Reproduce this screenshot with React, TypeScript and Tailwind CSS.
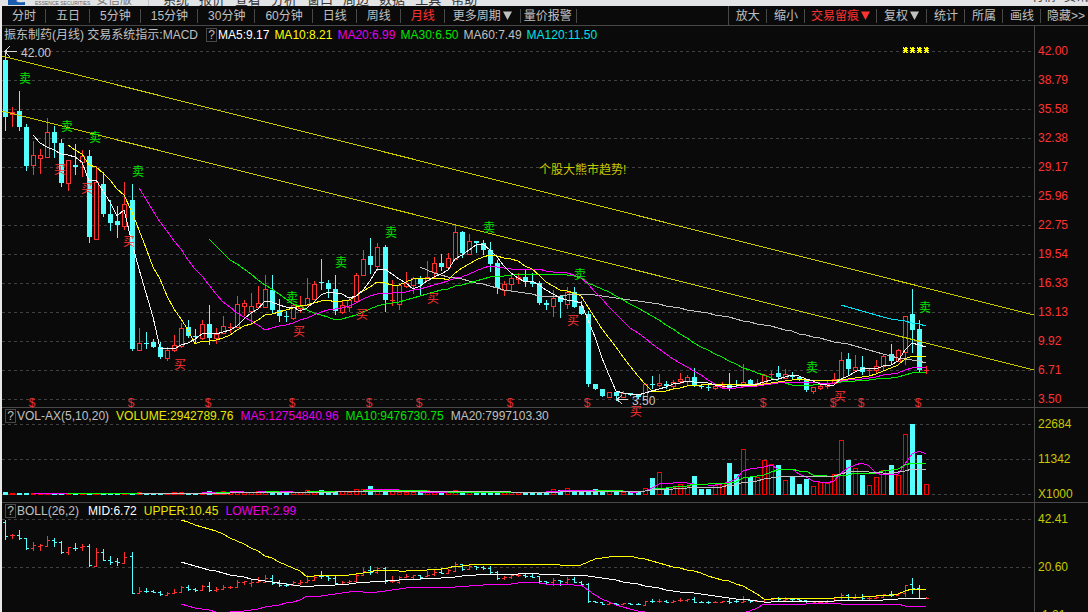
import React from "react";

type Candle = [up: 0 | 1, high: number, top: number, bottom: number, low: number];

// up/down, then high, body top, body bottom and low on the price scale
const candles: Candle[] = [
  [0, 52, 60, 117, 130], [1, 107, 112, 114, 126], [0, 91, 111, 127, 130], [0, 124, 127, 166, 170],
  [1, 141, 155, 165, 174], [1, 149, 155, 158, 173], [1, 118, 132, 157, 157], [0, 126, 132, 143, 157],
  [0, 139, 143, 183, 186], [1, 160, 160, 183, 190], [0, 144, 165, 167, 174], [1, 150, 156, 162, 176],
  [0, 150, 156, 237, 242], [1, 166, 182, 239, 239], [0, 172, 184, 214, 216], [0, 200, 214, 223, 230],
  [0, 206, 221, 225, 237], [1, 182, 204, 226, 229], [0, 184, 200, 349, 350], [1, 328, 343, 350, 350],
  [0, 332, 343, 344, 348], [0, 339, 342, 347, 347], [0, 342, 347, 357, 358], [1, 347, 350, 358, 360],
  [1, 335, 345, 350, 351], [1, 323, 328, 346, 347], [0, 320, 327, 336, 337], [0, 329, 336, 337, 342],
  [1, 320, 324, 338, 339], [0, 305, 324, 338, 344], [1, 328, 334, 338, 343], [1, 316, 326, 333, 333],
  [1, 323, 327, 328, 332], [1, 296, 304, 327, 327], [1, 300, 303, 306, 315], [1, 293, 306, 311, 324],
  [1, 286, 303, 307, 307], [1, 275, 289, 307, 307], [0, 275, 290, 310, 312], [0, 299, 310, 316, 321],
  [0, 311, 316, 317, 321], [1, 303, 305, 318, 319], [1, 296, 305, 308, 312], [1, 278, 298, 305, 305],
  [1, 281, 284, 299, 299], [0, 259, 282, 283, 289], [0, 280, 283, 289, 297], [0, 275, 289, 311, 314],
  [1, 300, 305, 312, 313], [1, 297, 300, 307, 311], [1, 273, 275, 301, 302], [1, 250, 259, 275, 275],
  [0, 238, 256, 265, 273], [1, 243, 247, 266, 270], [0, 245, 247, 300, 311], [1, 280, 300, 301, 305],
  [1, 283, 285, 304, 309], [1, 272, 283, 286, 287], [1, 277, 278, 285, 293], [0, 276, 279, 284, 295],
  [1, 261, 277, 280, 280], [1, 257, 263, 272, 278], [0, 254, 263, 267, 270], [1, 253, 258, 267, 267],
  [1, 225, 232, 259, 259], [0, 231, 232, 253, 257], [1, 234, 241, 254, 254], [0, 241, 241, 243, 252],
  [0, 240, 243, 250, 254], [0, 242, 250, 264, 271], [0, 260, 263, 288, 293], [1, 281, 284, 290, 295],
  [1, 275, 278, 284, 291], [1, 273, 277, 279, 283], [0, 270, 277, 282, 286], [0, 273, 282, 284, 286],
  [0, 281, 283, 303, 304], [0, 300, 303, 305, 309], [1, 290, 298, 306, 316], [0, 296, 296, 302, 317],
  [1, 287, 292, 304, 308], [0, 287, 292, 307, 307], [0, 301, 306, 314, 314], [0, 311, 314, 384, 386],
  [0, 384, 384, 389, 389], [0, 389, 389, 396, 396], [1, 392, 392, 397, 397], [0, 391, 392, 396, 400],
  [1, 391, 393, 397, 397], [0, 393, 393, 395, 395], [0, 394, 395, 397, 398], [1, 383, 384, 399, 399],
  [0, 376, 384, 385, 388], [1, 374, 383, 385, 386], [0, 381, 384, 386, 388], [1, 380, 382, 386, 389],
  [1, 373, 379, 381, 383], [1, 375, 377, 381, 384], [0, 368, 377, 386, 386], [0, 384, 386, 387, 388],
  [0, 385, 387, 388, 390], [1, 385, 386, 388, 389], [1, 382, 385, 387, 387], [0, 373, 384, 388, 390],
  [0, 380, 384, 385, 386], [1, 364, 382, 386, 386], [0, 379, 380, 384, 386], [1, 379, 383, 385, 385],
  [1, 374, 375, 383, 383], [1, 371, 374, 375, 378], [0, 366, 373, 377, 379], [1, 369, 374, 378, 378],
  [0, 372, 375, 377, 379], [0, 377, 377, 379, 380], [0, 379, 379, 390, 391], [1, 387, 387, 391, 393],
  [1, 384, 386, 388, 389], [1, 381, 384, 386, 388], [1, 373, 379, 383, 383], [1, 352, 360, 380, 380],
  [0, 353, 359, 369, 374], [1, 355, 367, 370, 370], [0, 356, 367, 372, 374], [1, 368, 370, 371, 375],
  [1, 360, 366, 370, 372], [1, 354, 356, 366, 369], [0, 344, 354, 361, 363], [1, 349, 350, 361, 361],
  [1, 316, 316, 352, 364], [0, 289, 314, 330, 352], [0, 320, 329, 370, 372], [1, 366, 370, 371, 373],
];

// early bars that stand above the base line, then every bar from the 92nd on
const earlyVolumes: Record<number, number> = {
  0: 492, 19: 492, 24: 492, 25: 492, 29: 491, 31: 491, 33: 491, 36: 491, 37: 491, 38: 491, 43: 490,
  44: 491, 45: 490, 48: 491, 50: 489, 51: 489, 52: 486, 53: 491, 54: 490, 55: 491, 60: 490, 64: 490,
  78: 489, 79: 490, 80: 488, 81: 491, 82: 491, 83: 491, 84: 489, 85: 491, 86: 491, 90: 491,
};
const lateVolumes = [
  488, 478, 472, 488, 487, 484, 486, 476, 489, 489, 485, 483, 463, 474, 449, 477, 477, 460, 464, 465,
  480, 477, 484, 479, 486, 482, 483, 474, 440, 460, 468, 475, 485, 477, 470, 465, 475, 434, 424, 455, 484,
];
const volumes = candles.map((_, i) =>
  i >= 91 ? lateVolumes[i - 91] : (earlyVolumes[i] ?? (i < 30 ? 493 : 492))
);

const barX = (i: number) => 5 + 7 * i + Math.floor((i + 18) / 36);
const toBoll = (y: number) => 520 + (y - 51) * 0.2434;

const closes = candles.map(([up, , top, bottom]) => (up ? top : bottom));

function average(data: number[], n: number, i: number) {
  let sum = 0;
  for (let k = i - n + 1; k <= i; k++) sum += data[k];
  return sum / n;
}

function linePoints(n: number, value: (i: number) => number) {
  const points: string[] = [];
  for (let i = n - 1; i < candles.length; i++) {
    points.push(`${barX(i)},${Math.round(value(i))}`);
  }
  return points.join(" ");
}

function deviation(i: number) {
  const mid = average(closes, 26, i);
  return Math.sqrt(average(closes.map((c) => (c - mid) ** 2), 26, i));
}

const priceLines = [
  { n: 60, color: "#c0c0c0" },
  { n: 120, color: "#00e0f0" },
  { n: 30, color: "#00f000" },
  { n: 20, color: "#ff00ff" },
  { n: 10, color: "#ffff00" },
  { n: 5, color: "#f4f4f4" },
];

const volumeLines = [
  { n: 5, color: "#ff00ff" },
  { n: 10, color: "#00ff00" },
  { n: 20, color: "#c0c0c0" },
];

const bollLines = [
  { k: 0, color: "#ffffff" },
  { k: -2, color: "#ffff00" },
  { k: 2, color: "#ff00ff" },
];

const sells = [
  [25, 78], [67, 126], [95, 137], [138, 171], [292, 297], [341, 262],
  [391, 232], [489, 227], [580, 274], [812, 367], [925, 307],
];
const buys = [
  [60, 169], [87, 188], [129, 241], [180, 364], [299, 331],
  [362, 314], [433, 298], [573, 320], [636, 411], [840, 396],
];
const dividends = [32, 131, 208, 292, 369, 419, 510, 587, 763, 833, 861, 918];

const menus = ["系统", "报价", "查看", "分析", "窗口", "周边", "数据", "工具", "帮助"];
const periods = ["分时", "五日", "5分钟", "15分钟", "30分钟", "60分钟", "日线", "周线", "月线"];
const prices = [
  "42.00", "38.79", "35.58", "32.38", "29.17", "25.96", "22.75",
  "19.54", "16.33", "13.13", "9.92", "6.71", "3.50",
];

function Triangle() {
  return (
    <svg width="9" height="9" viewBox="0 0 9 9" className="ml-0.5 shrink-0">
      <path d="M0 0.5H9L4.5 9Z" fill="currentColor" />
    </svg>
  );
}

function Separator() {
  return <span className="h-3.5 w-px shrink-0 bg-[#484848]" />;
}

function Grid({ rows }: { rows: number[] }) {
  return (
    <>
      {rows.map((y) => (
        <line
          key={y}
          x1="2"
          x2="100%"
          y1={y + 0.5}
          y2={y + 0.5}
          stroke="#414141"
          strokeDasharray="3 3"
        />
      ))}
    </>
  );
}

function Info({ items }: { items: [string, string][] }) {
  return (
    <>
      {items.map(([text, color]) => (
        <span key={text} className={color}>
          {text}
        </span>
      ))}
    </>
  );
}

function HelpButton() {
  return (
    <button
      type="button"
      className="h-3.5 w-[11px] shrink-0 border border-[#484848] text-center leading-3 text-[#c0c0c0]"
    >
      ?
    </button>
  );
}

function Axis({ labels, className }: { labels: string[]; className: string }) {
  return (
    <div
      className={`flex w-[54px] shrink-0 flex-col border-l border-[#484848] pl-[3px] leading-4 ${className}`}
    >
      {labels.map((label) => (
        <span key={label}>{label}</span>
      ))}
    </div>
  );
}

function PriceChart() {
  return (
    <svg className="block h-[363px] w-full overflow-visible" shapeRendering="crispEdges">
      <g transform="translate(-2 -44)">
        <Grid rows={prices.map((_, i) => 51 + 29 * i)} />
        {candles.map(([up, high, top, bottom, low], i) => {
          const x = barX(i);
          const color = up ? "#ff3232" : "#54ffff";
          return (
            <g key={i} fill={color}>
              <rect x={x} y={high} width="1" height={Math.max(top - high, 0)} />
              <rect x={x} y={bottom} width="1" height={Math.max(low - bottom, 0) + 1} />
              {up && bottom - top > 1 ? (
                <rect
                  x={x - 1.5}
                  y={top + 0.5}
                  width="4"
                  height={bottom - top}
                  fill="#0a0a0a"
                  stroke={color}
                />
              ) : (
                <rect x={x - 2} y={top} width="5" height={Math.max(bottom - top, 1)} />
              )}
            </g>
          );
        })}
        {priceLines.map(({ n, color }) => (
          <polyline
            key={n}
            points={linePoints(n, (i) => average(closes, n, i))}
            fill="none"
            stroke={color}
          />
        ))}
        <g stroke="#c8c800">
          <line x1="2" y1="56" x2="1034" y2="315" />
          <line x1="2" y1="111" x2="1034" y2="370" />
        </g>
        <g stroke="#d8d8d8" fill="none">
          <path d="M5 51.5H17M10 46L5 51.5L10 57" />
          <path d="M617 399.5H628M622 395L617 399.5L622 404" />
        </g>
        <g fontSize="12" fill="#c8c8c8">
          <text x="21" y="57">42.00</text>
          <text x="632" y="405">3.50</text>
          <text x="539" y="174" fill="#c8c800">个股大熊市趋势!</text>
        </g>
        <g fontSize="12" textAnchor="middle">
          {sells.map(([x, y]) => (
            <text key={x} x={x} y={y + 5} fill="#00e600">卖</text>
          ))}
          {buys.map(([x, y]) => (
            <text key={x} x={x} y={y + 5} fill="#ff3232">买</text>
          ))}
          {dividends.map((x) => (
            <text key={x} x={x} y="407" fill="#e03030">$</text>
          ))}
        </g>
        {[903, 910, 917, 924].map((x) => (
          <path
            key={x}
            transform={`translate(${x} 47)`}
            d="M0 0h1v1h1v-1h2v1h1v1h-1v1h1v1h-1v1h1v1h-2v-1h-1v1h-2v-1h1v-1h-1v-1h1v-1h-1z"
            fill="#ffff00"
          />
        ))}
      </g>
    </svg>
  );
}

function VolumeChart() {
  return (
    <svg className="block h-[78px] w-full" shapeRendering="crispEdges">
      <g transform="translate(-2 -424)">
        <Grid rows={[424, 459, 494]} />
        {volumes.map((y, i) =>
          candles[i][0] ? (
            <rect
              key={i}
              x={barX(i) - 1.5}
              y={y + 0.5}
              width="4"
              height={494 - y}
              fill="#0a0a0a"
              stroke="#ff0000"
            />
          ) : (
            <rect key={i} x={barX(i) - 2} y={y} width="5" height={495 - y} fill="#54ffff" />
          )
        )}
        {volumeLines.map(({ n, color }) => (
          <polyline
            key={n}
            points={linePoints(n, (i) => average(volumes, n, i))}
            fill="none"
            stroke={color}
          />
        ))}
      </g>
    </svg>
  );
}

function BollChart() {
  return (
    <svg className="block h-[93px] w-full" shapeRendering="crispEdges">
      <g transform="translate(-2 -519)">
        <Grid rows={[519, 567]} />
        {candles.map(([up, high, top, bottom, low], i) => {
          const x = barX(i);
          const y = Math.round(toBoll(high));
          const open = Math.round(toBoll(up ? bottom : top));
          const close = Math.round(toBoll(up ? top : bottom));
          return (
            <g key={i} fill={up ? "#ff3232" : "#54ffff"}>
              <rect x={x} y={y} width="1" height={Math.round(toBoll(low)) - y + 1} />
              <rect x={x - 2} y={open} width="2" height="1" />
              <rect x={x + 1} y={close} width="2" height="1" />
            </g>
          );
        })}
        {bollLines.map(({ k, color }) => (
          <polyline
            key={k}
            points={linePoints(26, (i) => toBoll(average(closes, 26, i) + k * deviation(i)))}
            fill="none"
            stroke={color}
          />
        ))}
      </g>
    </svg>
  );
}

export default function App() {
  return (
    <div className="flex h-screen flex-col overflow-hidden bg-[#0a0a0a] font-['Liberation_Sans','Noto_Sans_CJK_SC',sans-serif] text-xs whitespace-nowrap text-[#c0c0c0]">
      <header className="flex h-1.5 shrink-0 items-end overflow-hidden bg-[#e2e3e5] text-[#333]">
        <svg width="17" height="16" viewBox="0 0 17 16" className="ml-2 shrink-0">
          <rect width="17" height="15" fill="#1a5cae" />
          <path d="M8 11C10 9 13 10 17 9V12C13 12 11 13 8 11Z" fill="#e2e3e5" />
        </svg>
        <span className="ml-2.5 w-[53px] text-[5px] leading-[6px] text-[#666]">
          ESSENCE SECURITIES
        </span>
        <span className="ml-2 leading-3 text-[#777]">安信版</span>
        <span className="ml-4 h-1.5 w-px bg-[#c4c5c8]" />
        <nav className="ml-3.5 flex gap-2.5 text-[13px] leading-3">
          {menus.map((m) => (
            <button key={m} type="button">
              {m}
            </button>
          ))}
        </nav>
        <nav className="ml-auto flex gap-2 text-xs leading-[18px]">
          <button type="button">行情</button>
          <button type="button">资讯</button>
        </nav>
      </header>

      <div className="flex min-h-0 flex-1 flex-col border-l-2 border-[#e8e8e8]">
        <div className="flex h-5 shrink-0 items-center border-b border-[#484848]">
          {periods.map((p) => (
            <React.Fragment key={p}>
              <button
                type="button"
                className={p === "月线" ? "pr-[9px] pl-2.5 text-[#ff3232]" : "pr-[9px] pl-2.5"}
              >
                {p}
              </button>
              <Separator />
            </React.Fragment>
          ))}
          <button type="button" className="flex items-center px-2">
            更多周期
            <Triangle />
          </button>
          <Separator />
          <button type="button" className="pr-1 pl-[3px]">量价报警</button>
          <Separator />

          <div className="ml-auto flex h-full items-center border-l border-[#484848]">
            <button type="button" className="pr-1.5 pl-[7px]">放大</button>
            <Separator />
            <button type="button" className="pr-1.5 pl-[7px]">缩小</button>
            <Separator />
            <button type="button" className="flex items-center px-1.5 text-[#ff3232]">
              交易留痕
              <Triangle />
            </button>
            <Separator />
            <button type="button" className="flex items-center px-[7px]">
              复权
              <Triangle />
            </button>
            <Separator />
            <button type="button" className="pr-1.5 pl-[7px]">统计</button>
            <Separator />
            <button type="button" className="pr-1.5 pl-[7px]">所属</button>
            <Separator />
            <button type="button" className="pr-1.5 pl-[7px]">画线</button>
            <Separator />
            <button type="button" className="pr-[3px] pl-1.5">隐藏&gt;&gt;</button>
          </div>
        </div>

        <section className="flex shrink-0 border-b border-[#484848]">
          <div className="min-w-0 flex-1">
            <div className="flex h-[18px] items-center gap-[5px] pl-0.5">
              <span className="pr-[3px]">振东制药(月线) 交易系统指示:MACD</span>
              <div className="flex items-center gap-px">
                <HelpButton />
                <span className="text-white">MA5:9.17</span>
              </div>
              <Info
                items={[
                  ["MA10:8.21", "text-[#ffff00]"],
                  ["MA20:6.99", "text-[#e600e6]"],
                  ["MA30:6.50", "text-[#00e600]"],
                  ["MA60:7.49", "text-[#c0c0c0]"],
                  ["MA120:11.50", "text-[#00e0e6]"],
                ]}
              />
            </div>
            <PriceChart />
          </div>
          <Axis labels={prices} className="justify-between pt-[17px] text-[#ff3232]" />
        </section>

        <section className="flex shrink-0 border-b border-[#484848]">
          <div className="min-w-0 flex-1">
            <div className="flex h-4 items-center gap-[7px] pl-[3px]">
              <div className="flex items-center gap-px">
                <HelpButton />
                <span>VOL-AX(5,10,20)</span>
              </div>
              <Info
                items={[
                  ["VOLUME:2942789.76", "text-[#e6e600]"],
                  ["MA5:12754840.96", "text-[#e600e6]"],
                  ["MA10:9476730.75", "text-[#00e600]"],
                  ["MA20:7997103.30", "text-[#c0c0c0]"],
                ]}
              />
            </div>
            <VolumeChart />
          </div>
          <Axis labels={["22684", "11342", "X1000"]} className="justify-between pt-2 text-[#c8c800]" />
        </section>

        <section className="flex min-h-0 flex-1 overflow-hidden">
          <div className="min-w-0 flex-1">
            <div className="flex h-4 items-center gap-[7px] pl-[3px]">
              <div className="flex items-center gap-px pr-0.5">
                <HelpButton />
                <span>BOLL(26,2)</span>
              </div>
              <Info
                items={[
                  ["MID:6.72", "text-white"],
                  ["UPPER:10.45", "text-[#e6e600]"],
                  ["LOWER:2.99", "text-[#e600e6]"],
                ]}
              />
            </div>
            <BollChart />
          </div>
          <Axis labels={["42.41", "20.60", "-1.21"]} className="gap-8 pt-2 text-[#c8c800]" />
        </section>
      </div>
    </div>
  );
}
